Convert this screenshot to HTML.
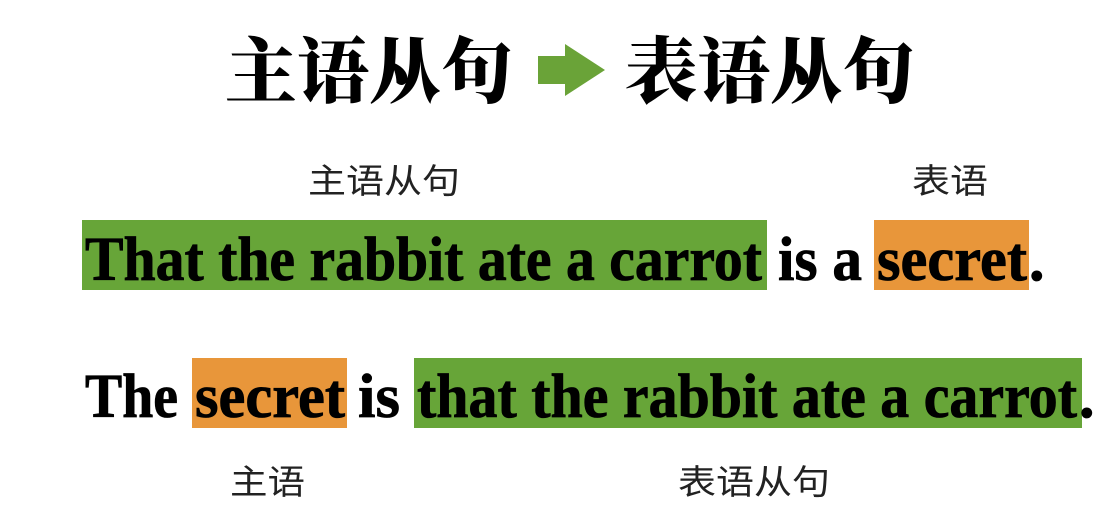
<!DOCTYPE html>
<html><head><meta charset="utf-8"><style>
html,body{margin:0;padding:0;background:#fff;width:1115px;height:525px;overflow:hidden}
</style></head><body>
<svg width="1115" height="525" xmlns="http://www.w3.org/2000/svg">
<g font-family="'Noto Serif CJK SC', serif" font-weight="900" font-size="72" fill="#000">
<text x="225" y="97" textLength="288" lengthAdjust="spacingAndGlyphs">主语从句</text>
<text x="625" y="97" textLength="290" lengthAdjust="spacingAndGlyphs">表语从句</text>
</g>
<polygon points="538,56 565,56 565,44 605,70 565,96 565,84 538,84" fill="#6aa338"/>
<g font-family="'Noto Sans CJK SC', sans-serif" font-size="34" fill="#222">
<text x="308" y="193" textLength="152" lengthAdjust="spacingAndGlyphs">主语从句</text>
<text x="912" y="193" textLength="76" lengthAdjust="spacingAndGlyphs">表语</text>
<text x="230" y="494" textLength="75" lengthAdjust="spacingAndGlyphs">主语</text>
<text x="678" y="494" textLength="152" lengthAdjust="spacingAndGlyphs">表语从句</text>
</g>
<rect x="82" y="220" width="685" height="70" fill="#67a538"/>
<rect x="874" y="220" width="155" height="70" fill="#e8963a"/>
<rect x="192" y="358" width="155" height="70" fill="#e8963a"/>
<rect x="414" y="358" width="668" height="70" fill="#67a538"/>
<g font-family="'Liberation Serif', serif" font-weight="bold" font-size="62" fill="#000" stroke="#000" stroke-width="0.8">
<text x="85" y="280" textLength="677" lengthAdjust="spacingAndGlyphs">That the rabbit ate a carrot</text>
<text x="778" y="280" textLength="84" lengthAdjust="spacingAndGlyphs">is a</text>
<text x="877" y="280" textLength="150" lengthAdjust="spacingAndGlyphs">secret</text>
<text x="1029" y="280">.</text>
<text x="85" y="417" textLength="93" lengthAdjust="spacingAndGlyphs">The</text>
<text x="195" y="417" textLength="150" lengthAdjust="spacingAndGlyphs">secret</text>
<text x="358" y="417" textLength="42" lengthAdjust="spacingAndGlyphs">is</text>
<text x="417" y="417" textLength="660" lengthAdjust="spacingAndGlyphs">that the rabbit ate a carrot</text>
<text x="1079" y="417">.</text>
</g>
</svg>
</body></html>
